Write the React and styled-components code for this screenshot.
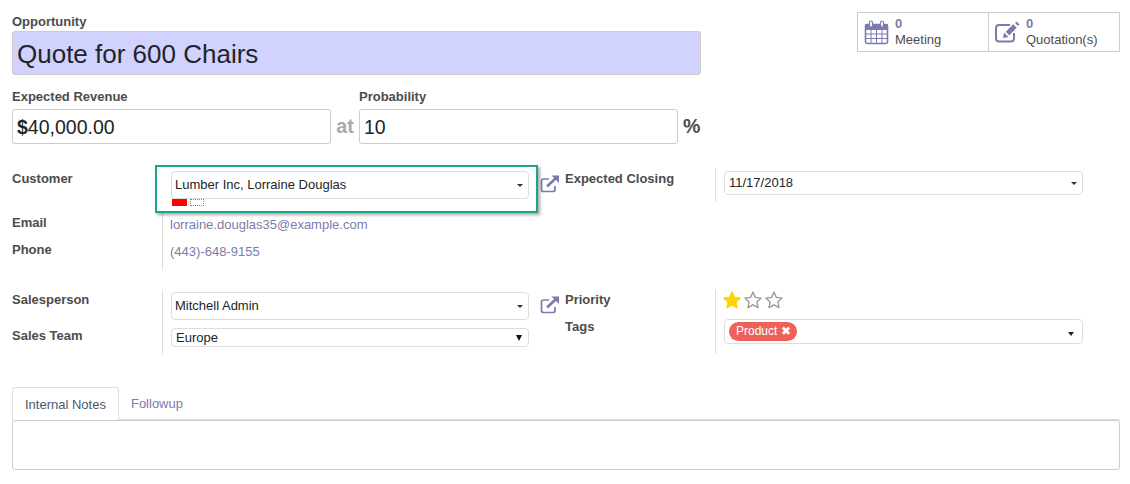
import styled, { createGlobalStyle } from "styled-components";

const Global = createGlobalStyle`
  html, body { margin: 0; padding: 0; background: #fff; }
  body {
    font-family: "Liberation Sans", Arial, sans-serif;
    font-size: 13px;
    color: #4c4c4c;
  }
  * { box-sizing: border-box; }
`;

const Sheet = styled.div`
  width: 1130px;
  height: 484px;
  padding: 12px 10px 0 12px;
  overflow: hidden;
`;

const Header = styled.div`
  display: flex;
  justify-content: space-between;
  align-items: flex-start;
  height: 132px;
`;

const TitleCol = styled.div`
  width: 689px;
`;

const Label = styled.div`
  font-weight: 700;
  font-size: 13px;
  line-height: 19px;
  color: #4c4c4c;
  height: ${(p) => p.$h || 19}px;
`;

const TitleBox = styled.div`
  height: 44px;
  background: #d2d2ff;
  border: 1px solid #ccc;
  border-radius: 3px;
  padding-left: 4px;
  font-size: 26px;
  line-height: 44px;
  color: #212529;
`;

const MoneyRow = styled.div`
  display: grid;
  grid-template-columns: 319px 28px 319px 22px;
  margin-top: 12px;
`;

const Spacer = styled.div``;

const BigInput = styled.div`
  height: 35px;
  border: 1px solid #ccc;
  border-radius: 3px;
  padding-left: 4px;
  font-size: 19.5px;
  line-height: 34px;
  color: #212529;
  b { font-weight: 700; }
`;

const Unit = styled.div`
  font-size: 19.5px;
  line-height: 34px;
  font-weight: 700;
  color: ${(p) => p.$color};
  text-align: ${(p) => p.$align || "center"};
  padding-left: ${(p) => p.$pad || 0}px;
`;

const Stats = styled.div`
  display: flex;
  width: 263px;
  height: 40px;
  border: 1px solid #ccc;
`;

const Stat = styled.div`
  width: ${(p) => p.$w}px;
  display: flex;
  align-items: center;
  gap: 6px;
  padding-left: 6px;
  & + & { border-left: 1px solid #ccc; }
  svg { flex: none; }
`;

const StatText = styled.div`
  line-height: 14px;
  font-size: 13px;
  color: #4c4c4c;
  b { display: block; color: #7c7bad; font-size: 13px; margin-bottom: 2px; }
`;

const Group = styled.div`
  display: grid;
  grid-template-columns: 150px 378px 175px 368px;
  align-items: start;
  margin-top: ${(p) => p.$mt}px;
  height: ${(p) => p.$h}px;
`;

const Col = styled.div`
  display: flex;
  flex-direction: column;
`;

const FieldCol = styled.div`
  display: flex;
  flex-direction: column;
  border-left: 1px solid #ddd;
  padding: ${(p) => p.$pt || 0}px 0 0 8px;
  height: ${(p) => p.$h}px;
`;

const SideCol = styled.div`
  display: flex;
`;

const IconSlot = styled.div`
  width: 20px;
  flex: none;
  padding-top: ${(p) => p.$top}px;
`;

const SideLabels = styled(Col)`
  padding-left: 5px;
`;

const Highlight = styled.div`
  margin: -4px 2px 0 -16px;
  height: 48px;
  padding: 4px 0 0 14px;
  border: 2px solid #1aa68a;
  background: #fff;
  box-shadow: 2px 2px 3px rgba(0, 0, 0, 0.35);
  position: relative;
  z-index: 1;
`;

const Select = styled.div`
  position: relative;
  flex: none;
  height: ${(p) => p.$h || 28}px;
  width: ${(p) => p.$w || 359}px;
  margin-top: ${(p) => p.$mt || 0}px;
  border: 1px solid #ddd;
  border-radius: 4px;
  padding-left: ${(p) => p.$pad ?? 4}px;
  font-size: 13px;
  line-height: ${(p) => (p.$h || 28) - 2}px;
  color: #212529;
  &::after {
    content: "";
    position: absolute;
    right: 5px;
    top: 50%;
    margin-top: -1px;
    border-top: 3px solid #333;
    border-left: 3px solid transparent;
    border-right: 3px solid transparent;
  }
`;

const NativeSelect = styled(Select)`
  &::after {
    right: 6px;
    margin-top: -3px;
    border-top: 6px solid #111;
    border-left: 3.5px solid transparent;
    border-right: 3.5px solid transparent;
  }
`;

const Flags = styled.div`
  display: flex;
  gap: 3px;
  height: 7px;
  padding-left: 1px;
`;

const RedFlag = styled.div`
  width: 15px;
  height: 7px;
  background: #f00;
`;

const DotFlag = styled.div`
  width: 14px;
  height: 7px;
  border: 1px dotted #5a9a5a;
`;

const LinkText = styled.div`
  color: #7c7bad;
  font-size: 13px;
  line-height: 19px;
  margin: ${(p) => p.$mt || 0}px 0 0 -1px;
`;

const Stars = styled.div`
  display: flex;
  gap: 3px;
  height: 28px;
  margin: -1px 0 0 -1px;
  align-items: flex-start;
`;

const Tag = styled.span`
  position: absolute;
  left: 4px;
  top: 2px;
  height: 19px;
  padding: 0 6px 0 7px;
  border-radius: 10px;
  background: #f0605a;
  color: #fff;
  font-size: 12px;
  line-height: 19px;
`;

const TagField = styled(Select)`
  &::after {
    right: 8px;
    margin-top: 0;
    border-top: 4px solid #222;
    border-left: 3.5px solid transparent;
    border-right: 3.5px solid transparent;
  }
`;

const Tabs = styled.div`
  display: flex;
  margin-top: 33px;
  height: 33px;
  border-bottom: 1px solid #ddd;
`;

const Tab = styled.div`
  height: 33px;
  padding: 0 12px;
  line-height: 33px;
  font-size: 13px;
  color: ${(p) => (p.$active ? "#4c5a6b" : "#7c7bad")};
  ${(p) =>
    p.$active &&
    `
    background: #fff;
    border: 1px solid #ddd;
    border-bottom: 0;
    border-radius: 3px 3px 0 0;
  `}
`;

const Notes = styled.div`
  height: 50px;
  border: 1px solid #ccc;
  border-radius: 3px;
`;

const External = () => (
  <svg width="20" height="20" viewBox="0 0 20 20" fill="none" stroke="#7c7bad" strokeWidth="1.7">
    <path d="M9 5H3.500A2 2 0 0 0 1.500 7v8.500a2 2 0 0 0 2 2H13a2 2 0 0 0 2-2V12" />
    <path d="M7 12.500L15.500 4.500" strokeWidth="2.600" />
    <path d="M11.500 1.500H19V9Z" fill="#7c7bad" stroke="none" />
  </svg>
);

const Calendar = () => (
  <svg width="25" height="25" viewBox="0 0 25 25" fill="none" stroke="#7c7bad">
    <rect x="1.500" y="4.500" width="22" height="19" rx="2" strokeWidth="1.600" />
    <path d="M1.500 4.500h22v5h-22z" fill="#7c7bad" />
    <path d="M1.500 14h22M1.500 18.500h22M7 9.500v14M12.500 9.500v14M18 9.500v14" strokeWidth="1" />
    <rect x="5.500" y="1" width="3" height="6" rx="1.500" fill="#fff" strokeWidth="1.200" />
    <rect x="16.500" y="1" width="3" height="6" rx="1.500" fill="#fff" strokeWidth="1.200" />
  </svg>
);

const Edit = () => (
  <svg width="25" height="22" viewBox="0 0 25 22" fill="none" stroke="#7c7bad">
    <path d="M15 4H4a3 3 0 0 0-3 3v10.500a3 3 0 0 0 3 3h12a3 3 0 0 0 3-3V12" strokeWidth="2" />
    <path d="M12.500 12.500L20 5" strokeWidth="5" />
    <path d="M21.500 3.500L23 2" strokeWidth="4" />
    <path d="M8 17l1-5.500 4.500 4.500z" fill="#7c7bad" stroke="none" />
  </svg>
);

const Star = ({ filled }) => (
  <svg width="18" height="18" viewBox="0 0 24 24">
    <path
      d="M12 1.500l3.200 7 7.600.9-5.600 5.200 1.500 7.600L12 18.400l-6.700 3.800 1.500-7.600L1.200 9.400l7.600-.9z"
      fill={filled ? "#ffd400" : "none"}
      stroke={filled ? "#ffd400" : "#9a9a9a"}
      strokeWidth="1.800"
      strokeLinejoin="round"
    />
  </svg>
);

export default function App() {
  return (
    <Sheet>
      <Global />
      <Header>
        <TitleCol>
          <Label>Opportunity</Label>
          <TitleBox>Quote for 600 Chairs</TitleBox>
          <MoneyRow>
            <Label $h={22}>Expected Revenue</Label>
            <Spacer />
            <Label $h={22}>Probability</Label>
            <Spacer />
            <BigInput>
              <b>$</b>40,000.00
            </BigInput>
            <Unit $color="#aaa">at</Unit>
            <BigInput>10</BigInput>
            <Unit $color="#4c4c4c" $align="left" $pad={5}>
              %
            </Unit>
          </MoneyRow>
        </TitleCol>
        <Stats>
          <Stat $w={130}>
            <Calendar />
            <StatText>
              <b>0</b>Meeting
            </StatText>
          </Stat>
          <Stat $w={131}>
            <Edit />
            <StatText>
              <b>0</b>Quotation(s)
            </StatText>
          </Stat>
        </Stats>
      </Header>

      <Group $mt={25} $h={101}>
        <Col>
          <Label $h={44}>Customer</Label>
          <Label $h={27}>Email</Label>
          <Label $h={27}>Phone</Label>
        </Col>
        <FieldCol $h={101}>
          <Highlight>
            <Select $w={358} $pad={3}>
              Lumber Inc, Lorraine Douglas
            </Select>
            <Flags>
              <RedFlag />
              <DotFlag />
            </Flags>
          </Highlight>
          <LinkText $mt={2}>lorraine.douglas35@example.com</LinkText>
          <LinkText $mt={8}>(443)-648-9155</LinkText>
        </FieldCol>
        <SideCol>
          <IconSlot $top={5}>
            <External />
          </IconSlot>
          <SideLabels>
            <Label>Expected Closing</Label>
          </SideLabels>
        </SideCol>
        <FieldCol $h={33} $pt={2}>
          <Select $h={24}>11/17/2018</Select>
        </FieldCol>
      </Group>

      <Group $mt={20} $h={64}>
        <Col>
          <Label $h={36}>Salesperson</Label>
          <Label $h={27}>Sales Team</Label>
        </Col>
        <FieldCol $h={64} $pt={2}>
          <Select $w={358} $pad={3}>
            Mitchell Admin
          </Select>
          <NativeSelect $w={358} $h={19} $mt={8}>
            Europe
          </NativeSelect>
        </FieldCol>
        <SideCol>
          <IconSlot $top={5}>
            <External />
          </IconSlot>
          <SideLabels>
            <Label $h={27}>Priority</Label>
            <Label $h={27}>Tags</Label>
          </SideLabels>
        </SideCol>
        <FieldCol $h={64} $pt={2}>
          <Stars>
            <Star filled />
            <Star />
            <Star />
          </Stars>
          <TagField $h={25}>
            <Tag>Product ✖</Tag>
          </TagField>
        </FieldCol>
      </Group>

      <Tabs>
        <Tab $active>Internal Notes</Tab>
        <Tab>Followup</Tab>
      </Tabs>
      <Notes />
    </Sheet>
  );
}
